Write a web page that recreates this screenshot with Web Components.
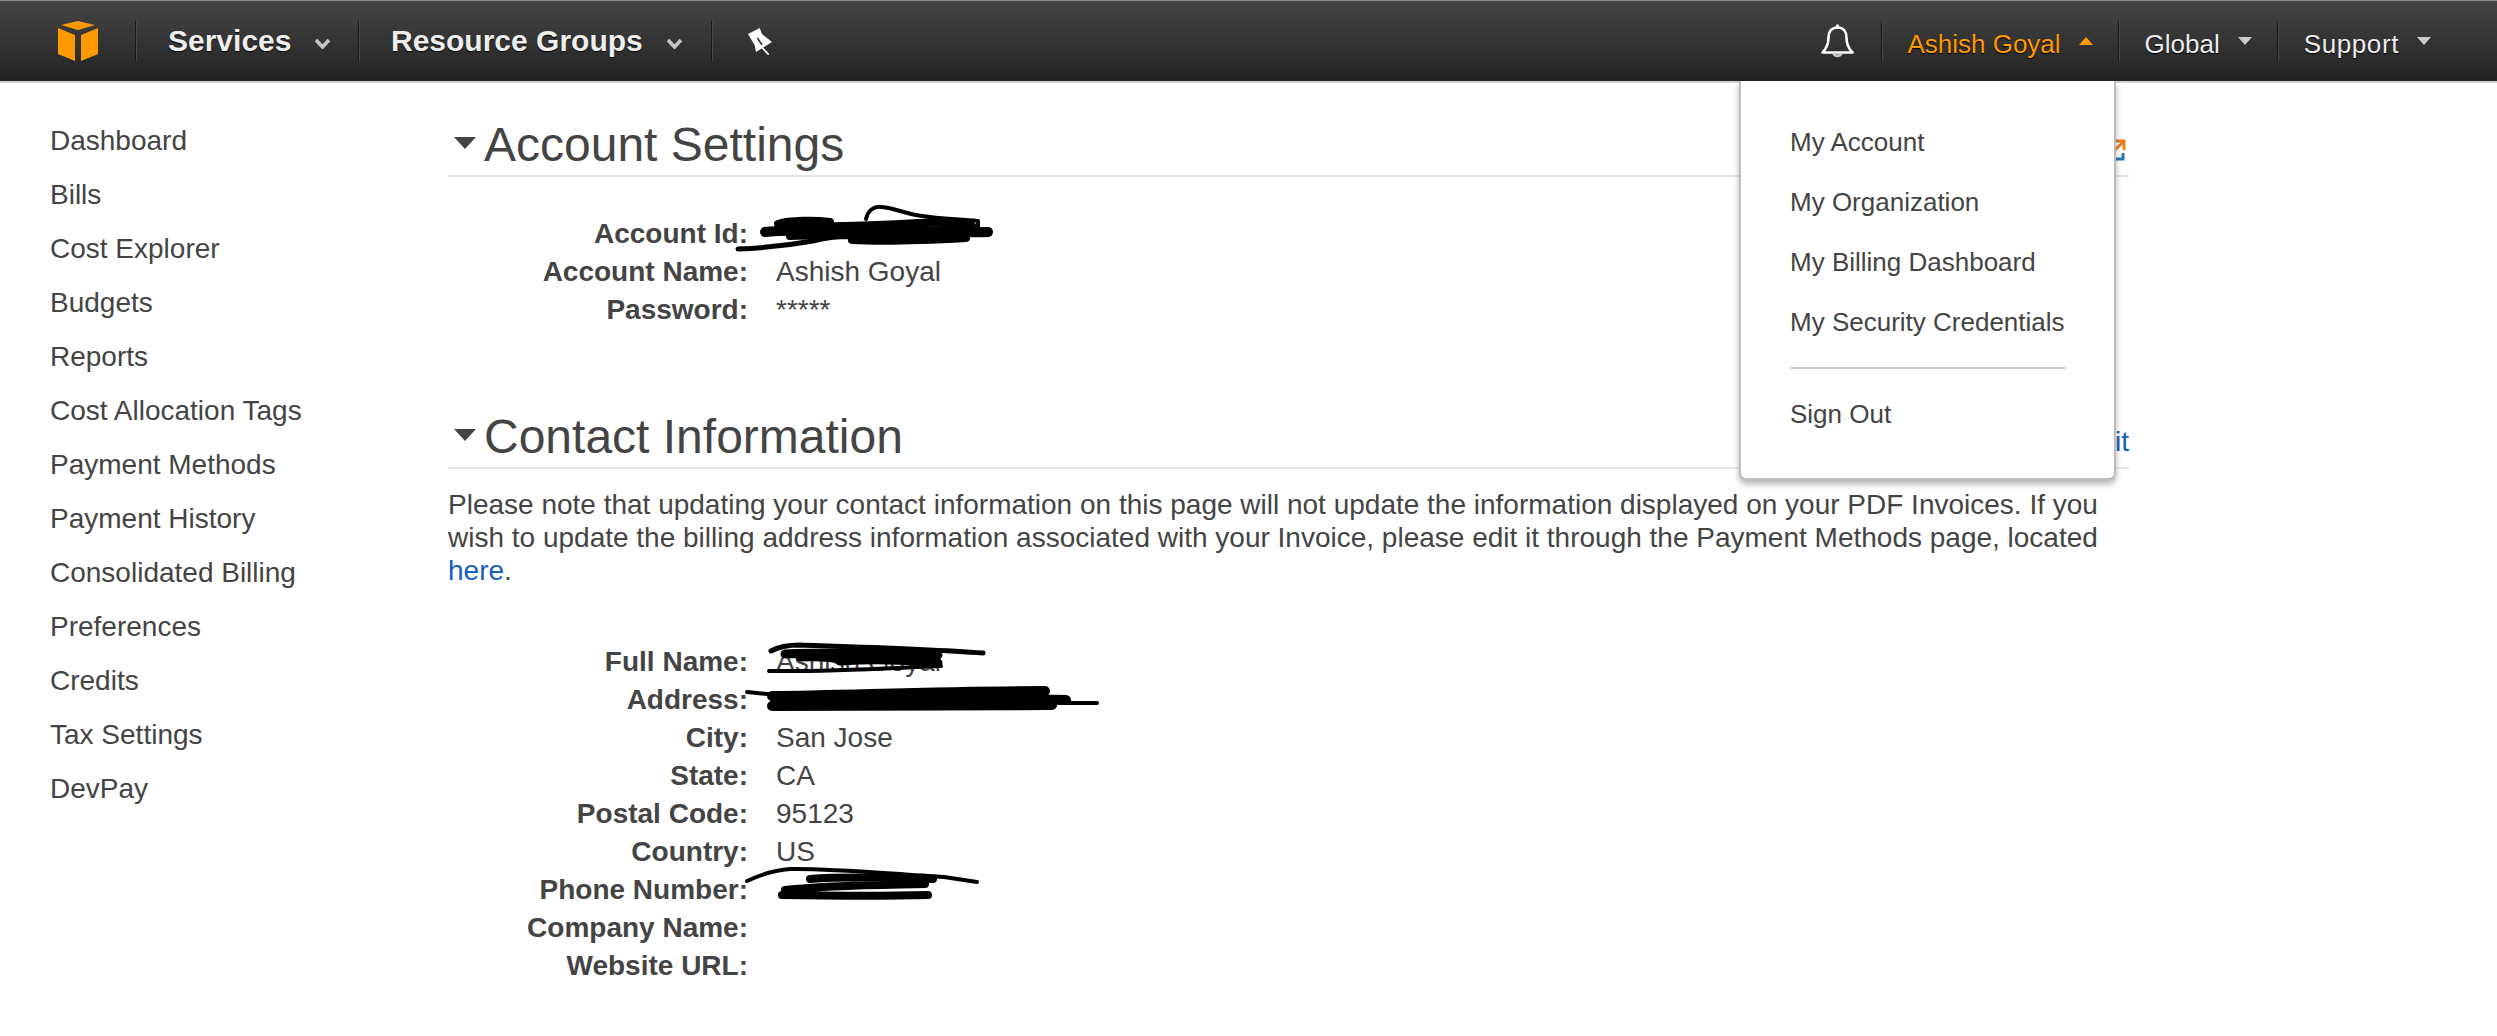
<!DOCTYPE html>
<html lang="en">
<head>
<meta charset="UTF-8">
<title>Account Settings</title>
<style>
  html, body { margin: 0; background: #fff; }
  body { width: 2497px; height: 1036px; overflow: hidden; font-family: "Liberation Sans", Arial, sans-serif; color: #444; position: relative; }
  .page { display: flex; }
  .content { width: 1681px; padding-top: 32px; }
  .lead { margin: 0; font-size: 28px; line-height: 33px; }
  a { color: #1560bd; text-decoration: none; }
  .edit { display: block; font-size: 28px; line-height: 34px; margin-bottom: 8px; }
  .ext { display: block; margin: 0 2px 14px 0; }
</style>
</head>
<body>

<template id="nav-item-tpl">
<style>
  :host { display: flex; align-items: center; height: 40px; box-sizing: border-box; border-left: 1px solid #191919; box-shadow: inset 1px 0 0 #474747; color: #eee; text-shadow: 0 1px 1px #000; font-size: 26px; padding: 0 25px 0 26px; }
  :host([main]) { font-size: 30px; font-weight: bold; padding: 0 26px 0 31px; }
  :host([open]) { color: #f90; }
  svg { margin-left: 18px; display: block; }
  :host([main]) svg { margin-left: 24px; margin-top: 4px; }
  .label { white-space: nowrap; position: relative; top: 3px; }
  :host([main]) .label { top: 0; left: 1px; }
  .tri { fill: #ccc; }
  :host([open]) .tri { fill: #f90; }
</style>
<span class="label"><slot></slot></span>
<svg class="caret" width="14" height="9" viewBox="0 0 14 9"></svg>
</template>

<template id="aws-topbar-tpl">
<style>
  :host { display: block; position: relative; height: 83px; box-sizing: border-box; border-top: 1px solid #8a8a8a; border-bottom: 2px solid #d2d2d2; background: linear-gradient(#454545, #232323); }
  .bar { display: flex; align-items: center; height: 80px; padding-left: 58px; }
  .logo { margin-right: 37px; display: block; }
  .end { margin-left: auto; margin-right: 41px; display: flex; align-items: center; }
</style>
<div class="bar">
  <svg class="logo" width="40" height="40" viewBox="0 0 40 40" fill="#f90">
    <polygon points="3,4 20,0 37,4 20,9"/>
    <polygon points="0,7 17,14 17,40 0,33"/>
    <polygon points="40,7 23,14 23,40 40,33"/>
  </svg>
  <slot name="left"></slot>
  <div class="end"><slot name="right"></slot></div>
</div>
<slot name="menu"></slot>
</template>

<template id="account-menu-tpl">
<style>
  :host { position: absolute; left: 1739px; top: 80px; width: 377px; height: 399px; box-sizing: border-box; background: #fff; border: 2px solid #bdbdbd; border-top: 0; border-radius: 0 0 7px 7px; box-shadow: 0 4px 6px rgba(0,0,0,.3); padding: 30.500px 50px 0 49px; font-size: 26px; color: #444; z-index: 5; }
  ::slotted(div) { height: 60px; line-height: 60px; white-space: nowrap; }
  ::slotted(hr) { border: 0; height: 2px; background: #ccc; margin: 15px 0 15px 0; width: 276px; }
</style>
<slot></slot>
</template>

<template id="side-nav-tpl">
<style>
  :host { display: block; width: 448px; box-sizing: border-box; padding: 30.500px 0 0 50px; font-size: 28px; color: #444; }
  ::slotted(div) { height: 54px; line-height: 54px; white-space: nowrap; }
</style>
<slot></slot>
</template>

<template id="section-panel-tpl">
<style>
  :host { display: block; }
  .head { display: flex; align-items: flex-end; height: 60px; border-bottom: 2px solid #e5e5e5; }
  .tri { width: 22px; height: 12px; margin: 0 8px 26px 6px; display: block; fill: #444; }
  h2 { margin: 0; font-size: 48px; font-weight: normal; line-height: 56px; position: relative; top: -2.500px; color: #444; }
  .act { margin-left: auto; }
</style>
<div class="head">
  <svg class="tri" viewBox="0 0 22 12"><polygon points="0,0 22,0 11,12"/></svg>
  <h2></h2>
  <div class="act"><slot name="action"></slot></div>
</div>
<slot></slot>
</template>

<template id="detail-list-tpl">
<style>
  :host { display: grid; grid-template-columns: 300px 1fr; column-gap: 28px; font-size: 28px; grid-auto-rows: 38px; line-height: 38px; }
</style>
<slot></slot>
</template>

<template id="detail-row-tpl">
<style>
  :host { display: contents; }
  b { text-align: right; white-space: nowrap; }
  span { white-space: nowrap; }
</style>
<b></b><span><slot></slot></span>
</template>

<template id="redact-marks-tpl">
<style>
  :host { position: absolute; left: 0; top: 0; display: block; pointer-events: none; }
  svg { display: block; }
  path { fill: none; stroke: #000; stroke-linecap: round; stroke-linejoin: round; }
</style>
<svg width="2497" height="1036" viewBox="0 0 2497 1036">
  <!-- account id -->
  <path stroke-width="4" d="M866 219 C868 210 874 206 882 207 C895 208 905 214 922 216 C940 219 960 219 978 221 L978 228"/>
  <path stroke-width="10" d="M765 232 C800 228 840 234 880 231 C920 230 950 233 988 232"/>
  <path stroke-width="8" d="M778 224 C790 220 815 220 830 222 M790 228 C820 226 860 226 900 224 C930 222 955 222 972 226 M852 240 C890 242 930 240 966 238 M790 236 C840 234 900 236 960 234"/>
  <path stroke-width="5" d="M738 249 C765 248 790 245 813 241 C825 238 840 236 852 236"/>
  <!-- full name -->
  <path stroke-width="5" d="M771 651 C780 646 790 645 800 645 C860 647 930 649 983 653"/>
  <path stroke-width="9" d="M785 654 C830 652 880 653 938 655 M840 661 C870 659 910 660 938 663 M800 657 C815 656 825 657 835 658"/>
  <path stroke-width="4" d="M769 671 C830 672 890 668 941 666"/>
  <!-- address -->
  <path stroke-width="4" d="M747 692 L778 695 M1068 703 L1097 703"/>
  <path stroke-width="10" d="M772 696 C850 695 950 691 1045 691 M775 702 C850 700 980 697 1066 700 M772 706 C860 705 960 706 1052 705"/>
  <!-- phone -->
  <path stroke-width="4" d="M747 881 C762 874 775 870 790 869 C830 868 890 874 944 877 L977 882"/>
  <path stroke-width="8" d="M810 879 C850 876 900 878 933 879 M785 890 C830 885 880 885 925 884 M782 895 C840 896 890 896 928 895"/>
</svg>
</template>

<aws-topbar>
  <nav-item slot="left" main caret="chevron" style="width:223px;box-sizing:border-box">Services</nav-item>
  <nav-item slot="left" main caret="chevron" style="width:353px;box-sizing:border-box">Resource Groups</nav-item>
  <pin-item slot="left"></pin-item>
  <svg slot="right" width="35" height="36" viewBox="0 0 35 36" style="margin-right:26px;display:block" fill="none" stroke="#fff" stroke-width="2.600" stroke-linejoin="round">
    <path d="M17.500 4.500 C11 4.500 8.500 9.500 8.500 14.500 C8.500 22.500 6 26 2.500 29.500 H32.500 C29 26 26.500 22.500 26.500 14.500 C26.500 9.500 24 4.500 17.500 4.500 Z"/>
    <path d="M17.500 4.500 V1.500"/>
    <path d="M13.500 30 A4.200 4.200 0 0 0 21.500 30" stroke="#c8c8c8"/>
  </svg>
  <nav-item slot="right" caret="up" open style="padding-left:25px">Ashish Goyal</nav-item>
  <nav-item slot="right" caret="down">Global</nav-item>
  <nav-item slot="right" caret="down" style="letter-spacing:.6px">Support</nav-item>
  <account-menu slot="menu">
    <div>My Account</div>
    <div>My Organization</div>
    <div>My Billing Dashboard</div>
    <div>My Security Credentials</div>
    <hr>
    <div>Sign Out</div>
  </account-menu>
</aws-topbar>

<div class="page">
  <side-nav>
    <div>Dashboard</div>
    <div>Bills</div>
    <div>Cost Explorer</div>
    <div>Budgets</div>
    <div>Reports</div>
    <div>Cost Allocation Tags</div>
    <div>Payment Methods</div>
    <div>Payment History</div>
    <div>Consolidated Billing</div>
    <div>Preferences</div>
    <div>Credits</div>
    <div>Tax Settings</div>
    <div>DevPay</div>
  </side-nav>
  <div class="content">
    <section-panel heading="Account Settings">
      <svg slot="action" class="ext" width="24" height="22" viewBox="0 0 24 22">
        <path d="M12 2 H21 V11 M21 2 L12 11" fill="none" stroke="#e8821e" stroke-width="3"/>
        <path d="M20 14 V20 H6" fill="none" stroke="#2e73b8" stroke-width="3"/>
      </svg>
      <detail-list style="margin-top:37.500px;height:192.500px">
        <detail-row label="Account Id:"></detail-row>
        <detail-row label="Account Name:">Ashish Goyal</detail-row>
        <detail-row label="Password:">*****</detail-row>
      </detail-list>
    </section-panel>
    <section-panel heading="Contact Information">
      <a slot="action" class="edit">Edit</a>
      <p class="lead" style="margin-top:18.500px">Please note that updating your contact information on this page will not update the information displayed on your PDF Invoices. If you wish to update the billing address information associated with your Invoice, please edit it through the Payment Methods page, located <a>here</a>.</p>
      <detail-list style="margin-top:56px">
        <detail-row label="Full Name:">Ashish Goyal</detail-row>
        <detail-row label="Address:"></detail-row>
        <detail-row label="City:">San Jose</detail-row>
        <detail-row label="State:">CA</detail-row>
        <detail-row label="Postal Code:">95123</detail-row>
        <detail-row label="Country:">US</detail-row>
        <detail-row label="Phone Number:"></detail-row>
        <detail-row label="Company Name:"></detail-row>
        <detail-row label="Website URL:"></detail-row>
      </detail-list>
    </section-panel>
  </div>
</div>
<redact-marks></redact-marks>

<script>
// stamp a template into an open shadow root
function stamp(el, id) {
  let root = el.attachShadow({ mode: "open" });
  root.appendChild(document.getElementById(id).content.cloneNode(true));
  return root;
}

class NavItem extends HTMLElement {
  connectedCallback() {
    let root = stamp(this, "nav-item-tpl");
    let svg = root.querySelector("svg");
    let kind = this.getAttribute("caret");
    if (kind === "chevron") {
      svg.setAttribute("width", "17");
      svg.setAttribute("height", "11");
      svg.setAttribute("viewBox", "0 0 17 11");
      svg.innerHTML = '<path d="M2 2 L8.500 9 L15 2" fill="none" stroke="#c4c4c4" stroke-width="3.600"/>';
    } else if (kind === "up") {
      svg.innerHTML = '<polygon class="tri" points="7,0 14,8 0,8"/>';
    } else {
      svg.innerHTML = '<polygon class="tri" points="0,0 14,0 7,8"/>';
    }
  }
}

class PinItem extends HTMLElement {
  connectedCallback() {
    this.attachShadow({ mode: "open" }).innerHTML = `
      <style>
        :host { display: flex; align-items: center; height: 40px; border-left: 1px solid #191919; box-shadow: inset 1px 0 0 #474747; padding-left: 36px; }
        svg { display: block; }
      </style>
      <svg width="24" height="27" viewBox="0 0 72 81" fill="#fff">
        <polygon points="0,18 35,0 42,18 72,42 24,72 20,52"/>
        <path d="M40 56 L62 80" stroke="#fff" stroke-width="5"/>
        <path d="M28 30 L42 50" stroke="#333" stroke-width="5"/>
      </svg>`;
  }
}

class AwsTopbar extends HTMLElement {
  connectedCallback() { stamp(this, "aws-topbar-tpl"); }
}

class AccountMenu extends HTMLElement {
  connectedCallback() { stamp(this, "account-menu-tpl"); }
}

class SideNav extends HTMLElement {
  connectedCallback() { stamp(this, "side-nav-tpl"); }
}

class SectionPanel extends HTMLElement {
  connectedCallback() {
    let root = stamp(this, "section-panel-tpl");
    root.querySelector("h2").textContent = this.getAttribute("heading");
  }
}

class DetailList extends HTMLElement {
  connectedCallback() { stamp(this, "detail-list-tpl"); }
}

class DetailRow extends HTMLElement {
  connectedCallback() {
    let root = stamp(this, "detail-row-tpl");
    root.querySelector("b").textContent = this.getAttribute("label");
  }
}

class RedactMarks extends HTMLElement {
  connectedCallback() { stamp(this, "redact-marks-tpl"); }
}

customElements.define("nav-item", NavItem);
customElements.define("pin-item", PinItem);
customElements.define("aws-topbar", AwsTopbar);
customElements.define("account-menu", AccountMenu);
customElements.define("side-nav", SideNav);
customElements.define("section-panel", SectionPanel);
customElements.define("detail-list", DetailList);
customElements.define("detail-row", DetailRow);
customElements.define("redact-marks", RedactMarks);
</script>
</body>
</html>
